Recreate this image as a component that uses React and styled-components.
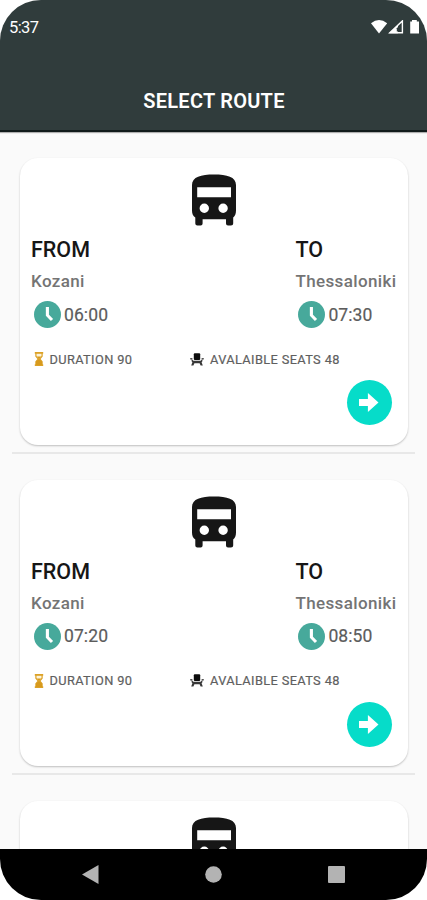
import React from 'react';
import styled, { createGlobalStyle } from 'styled-components';

const routes = [
  { id: 1, from: 'Kozani', to: 'Thessaloniki', departure: '06:00', arrival: '07:30', duration: 90, seats: 48 },
  { id: 2, from: 'Kozani', to: 'Thessaloniki', departure: '07:20', arrival: '08:50', duration: 90, seats: 48 },
];

const BusIcon = () => (
  <svg width="44" height="52" viewBox="0 0 44 52">
    <path
      fill="#161616"
      fillRule="evenodd"
      d="M0 11C0 3 9 .6 22 .6S44 3 44 11V36.5C44 40 43 42 41.2 43.6V49.5Q41.2 51.6 39 51.6H36Q34 51.6 34 49.5V45.2H10.6V49.5Q10.6 51.6 8.6 51.6H5.4Q3.3 51.6 3.3 49.5V43.6C1 42 0 40 0 36.5ZM5.2 13.2V23.3H39V13.2ZM12.3 29.5a4.7 4.7 0 1 0 0 9.4a4.7 4.7 0 1 0 0-9.4ZM31.1 29.5a4.7 4.7 0 1 0 0 9.4a4.7 4.7 0 1 0 0-9.4Z"
    />
  </svg>
);

const ClockIcon = () => (
  <svg width="27" height="27" viewBox="0 0 27 27">
    <circle cx="13.5" cy="13.5" r="13.5" fill="#47a99b" />
    <path d="M13.4 6V14.2L18 19" fill="none" stroke="#fff" strokeWidth="3.1" />
  </svg>
);

const HourglassIcon = () => (
  <svg width="10" height="14" viewBox="0 0 10 14">
    <path d="M.8 .9H9.2M.8 13.1H9.2" stroke="#dca126" strokeWidth="1.6" />
    <path d="M1.9 1.2V4.2L4.3 7L1.9 9.8V13H8.1V9.8L5.7 7L8.1 4.2V1.2Z" fill="#fdf3d8" stroke="#dca126" strokeWidth="1.2" />
    <path d="M3 4.6H7L5.3 7L8 9.6V13H2V9.6L4.7 7Z" fill="#d79a1d" />
  </svg>
);

const SeatIcon = () => (
  <svg width="14" height="13" viewBox="0 0 14 13">
    <rect x="3.8" y=".3" width="6.4" height="6.7" rx="1" fill="#0c0c0c" />
    <path d="M.2 4.9H2.4V6.6H.2ZM11.6 4.9H13.8V6.6H11.6Z" fill="#555" />
    <path d="M1.6 6L3.4 7.8H10.6L12.4 6V8.2L11.6 9.2L12.8 12.4H10.6L9.6 10.2H4.4L3.4 12.4H1.2L2.4 9.2L1.6 8.2Z" fill="#383838" />
  </svg>
);

const ArrowIcon = () => (
  <svg width="20" height="19" viewBox="0 0 20 19">
    <path d="M0 5.9H8.9V0L19.5 9.5L8.9 19V13.1H0Z" fill="#fff" />
  </svg>
);

const StatusIcons = () => (
  <svg width="49" height="16" viewBox="0 0 49 16">
    <path d="M0 3.2Q8-3 16.2 3.2L8 13.6Z" fill="#fff" />
    <path d="M18.8 12.7L31.4 .9V12.7Z" fill="none" stroke="#fff" strokeWidth="1.4" />
    <path d="M18 13.3L27 5V13.3Z" fill="#fff" />
    <path d="M29 5V11.4H25.8V8.2Z" fill="#303c3c" />
    <path d="M39.2 1.4H41V0H45.8V1.4H48V13.6H39.2Z" fill="#fff" />
  </svg>
);

const RouteCard = ({ route }) => (
  <Item>
    <Card>
      <Bus>
        <BusIcon />
      </Bus>
      <Stops>
        <Stop>
          <h2>FROM</h2>
          <City>{route.from}</City>
          <Time>
            <ClockIcon />
            <span>{route.departure}</span>
          </Time>
        </Stop>
        <Stop>
          <h2>TO</h2>
          <City>{route.to}</City>
          <Time>
            <ClockIcon />
            <span>{route.arrival}</span>
          </Time>
        </Stop>
      </Stops>
      <Details>
        <Detail $gap="5.5px">
          <HourglassIcon />
          <span>DURATION {route.duration}</span>
        </Detail>
        <Detail $gap="6.5px">
          <SeatIcon />
          <span>AVALAIBLE SEATS {route.seats}</span>
        </Detail>
      </Details>
      <NextButton aria-label="Select route">
        <ArrowIcon />
      </NextButton>
    </Card>
  </Item>
);

const PendingCard = () => (
  <Item>
    <Card>
      <Bus>
        <BusIcon />
      </Bus>
    </Card>
  </Item>
);

const App = () => {
  return (
    <Phone>
      <GlobalStyle />
      <Header>
        <StatusBar>
          <span>5:37</span>
          <StatusIcons />
        </StatusBar>
        <h1>SELECT ROUTE</h1>
      </Header>
      <List>
        {routes.map(route => (
          <RouteCard key={route.id} route={route} />
        ))}
        <PendingCard />
      </List>
      <NavBar>
        <svg width="17" height="19" viewBox="0 0 17 19">
          <path d="M0 9.5L16.5 0V19Z" fill="#b3b3b3" />
        </svg>
        <svg width="17" height="17" viewBox="0 0 17 17">
          <circle cx="8.5" cy="8.5" r="8.3" fill="#b3b3b3" />
        </svg>
        <svg width="17" height="17" viewBox="0 0 17 17">
          <rect width="17" height="17" rx="1" fill="#b3b3b3" />
        </svg>
      </NavBar>
    </Phone>
  );
};

const GlobalStyle = createGlobalStyle`
  * {
    box-sizing: border-box;
  }

  body {
    margin: 0;
    background: #fff;
    font-family: Roboto, sans-serif;
  }

  h1, h2, p {
    margin: 0;
    font-weight: 500;
  }

  svg {
    display: block;
    flex-shrink: 0;
  }
`;

const Phone = styled.div`
  width: 427px;
  height: 900px;
  display: flex;
  flex-direction: column;
  overflow: hidden;
  border-radius: 41px;
  background: #fafafa;
`;

const Header = styled.header`
  height: 132px;
  flex-shrink: 0;
  background: #303c3c;
  border-bottom: 2px solid #111b1b;
  box-shadow: 0 1px 1px rgba(0, 0, 0, 0.3);
  color: #fff;

  h1 {
    margin-top: 34px;
    padding-left: 1px;
    font-size: 20px;
    font-weight: 600;
    line-height: 24px;
    letter-spacing: 0.25px;
    text-align: center;
  }
`;

const StatusBar = styled.div`
  height: 55px;
  padding: 0 7px 0 9px;
  display: flex;
  align-items: center;
  justify-content: space-between;
  font-size: 16.5px;
  letter-spacing: -0.6px;
`;

const List = styled.main`
  flex: 1;
  min-height: 0;
  overflow: hidden;
  padding: 0 12px;
`;

const Item = styled.section`
  height: 321.5px;
  padding: 26px 7.5px 0 8px;
  border-bottom: 2px solid #e8e8e8;
`;

const Card = styled.article`
  height: 286.5px;
  padding: 16px 11px 0;
  border-radius: 18px;
  background: #fff;
  box-shadow: 0 1px 2px rgba(0, 0, 0, 0.24);
`;

const Bus = styled.div`
  height: 63px;
  display: flex;
  justify-content: center;
`;

const Stops = styled.div`
  display: flex;
  justify-content: space-between;
`;

const Stop = styled.div`
  h2 {
    color: #161616;
    font-size: 21.5px;
    line-height: 25px;
  }
`;

const City = styled.p`
  margin-top: 8px;
  color: #747474;
  font-size: 17px;
  line-height: 22px;
  letter-spacing: 0.38px;
`;

const Time = styled.div`
  height: 27px;
  margin-top: 9px;
  padding-left: 3px;
  display: flex;
  align-items: center;
  gap: 3px;
  color: #5c5c5c;
  font-size: 17.5px;
  letter-spacing: 0.1px;
  -webkit-text-stroke: 0.2px;
`;

const Details = styled.div`
  height: 20px;
  margin-top: 21px;
  padding-left: 3px;
  display: flex;
`;

const Detail = styled.div`
  display: flex;
  align-items: center;
  gap: ${({ $gap }) => $gap};
  color: #5f5f5f;
  font-size: 12.8px;
  letter-spacing: 0.37px;
  -webkit-text-stroke: 0.2px;

  &:first-child {
    width: 155.5px;
  }
`;

const NextButton = styled.button`
  width: 45px;
  height: 45px;
  margin: 11px 5px 0 auto;
  padding: 0;
  display: flex;
  align-items: center;
  justify-content: center;
  border: none;
  border-radius: 50%;
  background: #06dcc9;
`;

const NavBar = styled.nav`
  height: 51px;
  flex-shrink: 0;
  padding: 0 82px;
  display: flex;
  align-items: center;
  justify-content: space-between;
  background: #000;
`;

export default App;
